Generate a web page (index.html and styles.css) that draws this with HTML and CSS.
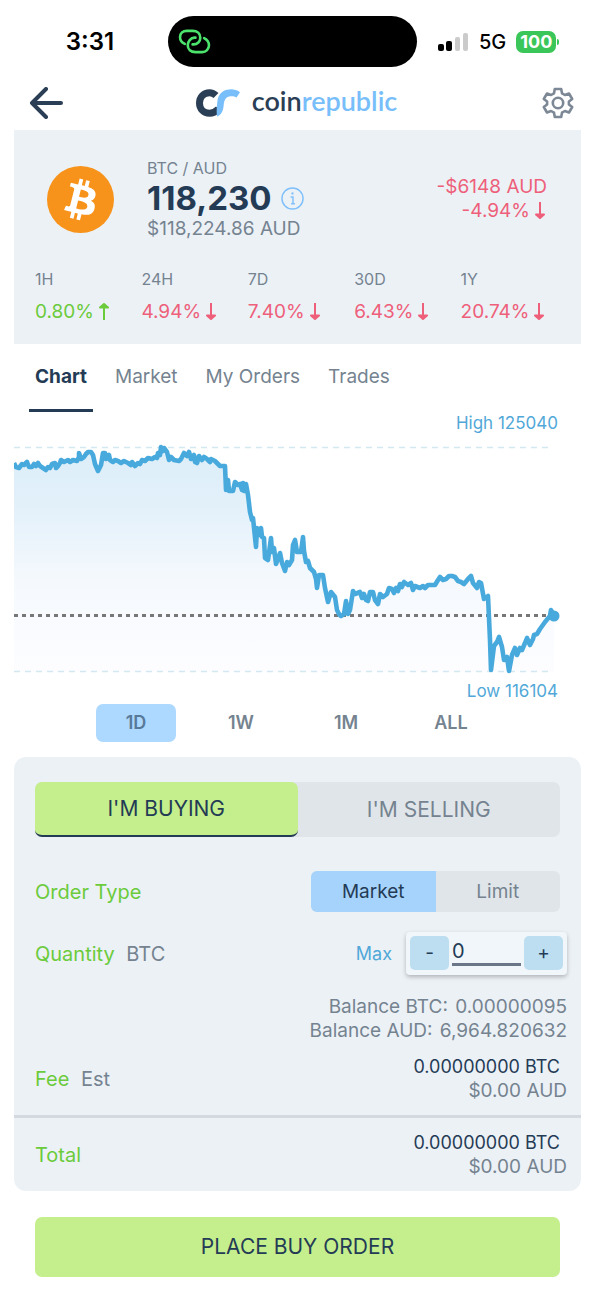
FILE: index.html
```html
<!DOCTYPE html>
<html lang="en">
<head>
    <meta charset="UTF-8">
    <meta name="viewport" content="width=device-width, initial-scale=1.0">
    <title>BTC / AUD - coinrepublic</title>
    <link rel="stylesheet" href="styles.css">
</head>
<body>
    <div class="status-bar">
        <div class="time">3:31</div>
        <div class="island">
            <svg width="33" height="27" viewBox="0 0 34 28" fill="none" stroke="#4be36c" stroke-width="2.700" stroke-linecap="round">
                <path d="M7 16.500C4 15 2 12.500 2 9.500C2 5.500 5 3 9 3H15C20 3 23 6 23 10C23 14 20 17 16 17H15"/>
                <path d="M27 10.500C30 12 32 14.500 32 18C32 22 29 25 25 25H18C13 25 10 22 10 18C10 14 13 10 17 10H18"/>
            </svg>
        </div>
        <div class="indicators">
            <svg width="31" height="20" viewBox="0 0 31 20">
                <rect x="0" y="12" width="6" height="7" rx="2" fill="#000"/>
                <rect x="8" y="9" width="6" height="10" rx="2" fill="#000"/>
                <rect x="17" y="5" width="5" height="14" rx="2" fill="#cbcbcb"/>
                <rect x="25" y="1" width="5" height="18" rx="2" fill="#cbcbcb"/>
            </svg>
            <span class="network">5G</span>
            <span class="battery">100</span>
        </div>
    </div>

    <header class="header">
        <button class="icon-button" aria-label="Back">
            <svg width="34" height="32" viewBox="0 0 34 32" fill="none" stroke="#2a3f55" stroke-width="4" stroke-linecap="round" stroke-linejoin="round">
                <path d="M17 2L3 16L17 30M3 16H32"/>
            </svg>
        </button>
        <a class="logo" href="#">
            <svg width="44" height="28" viewBox="0 0 44 28" fill="none">
                <path d="M20 6.500C18 4.500 16 3.700 13.500 3.700C7.700 3.700 3.500 8 3.500 14C3.500 20 7.700 24.200 13.500 24.200C17.500 24.200 20 22.500 22.500 20" stroke="#2a3f55" stroke-width="7"/>
                <path d="M21 27.500C25.800 25.500 27.300 21.500 27.700 16C28.200 10 30.500 7.500 34.500 7.200C37 7 38.800 7.400 40.500 8.500L44 3.200C41 1 37.500 .2 33.500 .4C26 .8 22 5.500 21.300 13C20.900 18 20.300 22 21 27.500Z" fill="#78befa"/>
            </svg>
            <span class="logo-text">coin<span>republic</span></span>
        </a>
        <button class="icon-button" aria-label="Settings">
            <svg width="32" height="32" viewBox="0 0 32 32" fill="none" stroke="#7d8896" stroke-width="2.600" stroke-linejoin="round">
                <path d="M12.800 2H19.200L20 6.300L22.900 8L27 6.500L30.200 12L26.900 14.500V17.500L30.200 20L27 25.500L22.900 24L20 25.700L19.200 30H12.800L12 25.700L9.100 24L5 25.500L1.800 20L5.100 17.500V14.500L1.800 12L5 6.500L9.100 8L12 6.300Z"/>
                <circle cx="16" cy="16" r="5.200"/>
            </svg>
        </button>
    </header>

    <main>
        <section class="summary">
            <div class="coin">
                <svg class="coin-icon" width="67" height="67" viewBox="0 0 32 32">
                    <circle cx="16" cy="16" r="16" fill="#f7931a"/>
                    <path fill="#fff" d="M23.189 14.020c.314-2.096-1.283-3.223-3.465-3.975l.708-2.840-1.728-.43-.69 2.765c-.454-.114-.92-.22-1.385-.326l.695-2.783L15.596 6l-.708 2.839c-.376-.086-.746-.17-1.104-.26l.002-.009-2.384-.595-.46 1.846s1.283.294 1.256.312c.7.175.826.638.805 1.006l-.806 3.235c.048.012.11.030.180.057l-.183-.045-1.130 4.532c-.086.212-.303.531-.793.410.018.025-1.256-.313-1.256-.313l-.858 1.978 2.250.561c.418.105.828.215 1.231.318l-.715 2.872 1.727.430.708-2.840c.472.127.930.245 1.378.357l-.706 2.828 1.728.430.715-2.866c2.948.558 5.164.333 6.097-2.333.752-2.146-.037-3.385-1.588-4.192 1.130-.260 1.980-1.003 2.207-2.538zm-3.950 5.538c-.533 2.147-4.148.986-5.320.695l.950-3.805c1.172.293 4.929.872 4.370 3.110zm.535-5.569c-.487 1.953-3.495.960-4.470.717l.860-3.450c.975.243 4.118.696 3.610 2.733z"/>
                </svg>
                <div class="price">
                    <div class="pair">BTC / AUD</div>
                    <div class="last">
                        118,230
                        <svg width="23" height="23" viewBox="0 0 24 24" fill="none" stroke="#7fc0fa" stroke-width="1.500">
                            <circle cx="12" cy="12" r="11"/>
                            <path d="M10 10.500H12.500V17M10.500 17.500H14.500"/>
                            <circle cx="12" cy="6.800" r="1.200" fill="#7fc0fa" stroke="none"/>
                        </svg>
                    </div>
                    <div class="aud">$118,224.86 AUD</div>
                </div>
                <div class="change down">
                    <div>-$6148 AUD</div>
                    <div>-4.94%<svg class="arrow" viewBox="0 0 10 17"><path d="M5 0V14M1 12.500L5 16L9 12.500Z"/></svg></div>
                </div>
            </div>
            <dl class="periods">
                <div>
                    <dt>1H</dt>
                    <dd class="up">0.80%<svg class="arrow" viewBox="0 0 10 17"><path d="M5 17V3M1 4.500L5 1L9 4.500Z"/></svg></dd>
                </div>
                <div>
                    <dt>24H</dt>
                    <dd class="down">4.94%<svg class="arrow" viewBox="0 0 10 17"><path d="M5 0V14M1 12.500L5 16L9 12.500Z"/></svg></dd>
                </div>
                <div>
                    <dt>7D</dt>
                    <dd class="down">7.40%<svg class="arrow" viewBox="0 0 10 17"><path d="M5 0V14M1 12.500L5 16L9 12.500Z"/></svg></dd>
                </div>
                <div>
                    <dt>30D</dt>
                    <dd class="down">6.43%<svg class="arrow" viewBox="0 0 10 17"><path d="M5 0V14M1 12.500L5 16L9 12.500Z"/></svg></dd>
                </div>
                <div>
                    <dt>1Y</dt>
                    <dd class="down">20.74%<svg class="arrow" viewBox="0 0 10 17"><path d="M5 0V14M1 12.500L5 16L9 12.500Z"/></svg></dd>
                </div>
            </dl>
        </section>

        <nav class="tabs">
            <a class="active" href="#">Chart</a>
            <a href="#">Market</a>
            <a href="#">My Orders</a>
            <a href="#">Trades</a>
        </nav>

        <section class="chart">
            <div class="limit">High 125040</div>
            <svg class="plot" viewBox="14 434 567 246" fill="none">
                <defs>
                    <linearGradient id="fade" x1="0" y1="447" x2="0" y2="672" gradientUnits="userSpaceOnUse">
                        <stop offset="0" stop-color="#dceef9"/>
                        <stop offset="0.25" stop-color="#e2f0fa"/>
                        <stop offset="0.6" stop-color="#f5f9fd"/>
                        <stop offset="1" stop-color="#fdfdff"/>
                    </linearGradient>
                </defs>
                <path id="area" fill="url(#fade)"/>
                <path d="M14 447.500H552M14 671.500H552" stroke="#d3e8f1" stroke-width="1.300" stroke-dasharray="6 5"/>
                <path d="M14 615.500H552" stroke="#777" stroke-width="3" stroke-dasharray="4 4"/>
                <path id="line" stroke="#48a9dc" stroke-width="4.600" stroke-linejoin="round" stroke-linecap="butt"/>
                <circle cx="554" cy="616" r="5.500" fill="#48a9dc"/>
            </svg>
            <div class="limit">Low 116104</div>
        </section>

        <div class="ranges">
            <button class="active">1D</button>
            <button>1W</button>
            <button>1M</button>
            <button>ALL</button>
        </div>

        <form class="order">
            <div class="panel">
                <div class="side">
                    <button type="button" class="active">I'M BUYING</button>
                    <button type="button">I'M SELLING</button>
                </div>

                <div class="row type-row">
                    <span class="label">Order Type</span>
                    <div class="type">
                        <button type="button" class="active">Market</button>
                        <button type="button">Limit</button>
                    </div>
                </div>

                <div class="row quantity-row">
                    <label class="label" for="quantity">Quantity <span>BTC</span></label>
                    <a class="max" href="#">Max</a>
                    <div class="stepper">
                        <button type="button">-</button>
                        <input id="quantity" type="text" inputmode="decimal" value="0">
                        <button type="button">+</button>
                    </div>
                </div>

                <div class="balance">
                    <div>Balance BTC: <span>0.00000095</span></div>
                    <div>Balance AUD: <span>6,964.820632</span></div>
                </div>

                <div class="row amount-row">
                    <span class="label">Fee <span>Est</span></span>
                    <div class="amount">
                        <div class="btc">0.00000000 BTC</div>
                        <div>$0.00 AUD</div>
                    </div>
                </div>
                <hr>
                <div class="row amount-row">
                    <span class="label">Total</span>
                    <div class="amount">
                        <div class="btc">0.00000000 BTC</div>
                        <div>$0.00 AUD</div>
                    </div>
                </div>
            </div>
            <button class="submit">PLACE BUY ORDER</button>
        </form>
    </main>

    <script src="chart.js"></script>
</body>
</html>
```

FILE: chart.js
```js
const points = [
    [14,463],[16,467],[19,468],[22,464],[24,465],[27,462],[29,467],[32,467],[34,464],[36,466],[38,463],
    [40,466],[43,468],[46,470],[48,467],[50,468],[52,464],[55,463],[56,468],[58,466],[60,463],[61,460],
    [64,462],[68,460],[70,462],[73,460],[77,461],[79,457],[79,453],[81,459],[84,457],[86,454],[88,452],
    [91,452],[93,455],[95,464],[98,471],[101,465],[103,453],[105,453],[106,459],[109,455],[110,460],
    [113,462],[115,460],[118,461],[121,463],[124,461],[128,463],[131,465],[132,462],[135,466],[138,463],
    [140,464],[142,460],[145,461],[148,458],[152,459],[155,457],[157,458],[158,453],[160,455],[161,447],
    [163,451],[164,448],[167,452],[169,460],[171,457],[174,460],[179,461],[181,459],[183,455],[184,453],
    [187,456],[189,452],[191,459],[194,455],[195,462],[197,463],[199,456],[202,460],[204,457],[207,459],
    [210,462],[211,459],[215,461],[218,464],[220,466],[225,466],[226,490],[228,480],[229,491],[233,491],
    [235,482],[238,485],[240,484],[242,490],[243,483],[244,491],[246,484],[248,495],[250,512],[252,520],
    [253,518],[256,547],[257,528],[260,535],[261,528],[262,537],[264,538],[265,558],[268,560],[271,538],
    [272,552],[274,548],[276,564],[280,553],[282,563],[285,571],[287,562],[289,565],[292,560],[293,545],
    [295,540],[297,552],[301,552],[303,537],[304,551],[306,562],[308,561],[310,568],[314,572],[316,579],
    [317,588],[319,575],[323,575],[325,588],[328,602],[331,592],[335,597],[337,610],[339,614],[341,616],
    [344,614],[346,601],[348,614],[350,610],[353,591],[355,594],[360,592],[362,598],[364,594],[366,600],
    [368,601],[370,592],[373,592],[375,600],[378,604],[380,594],[383,597],[387,594],[389,588],[392,589],
    [394,593],[396,588],[398,591],[400,584],[402,587],[404,582],[408,585],[411,583],[413,590],[415,586],
    [420,588],[423,586],[425,588],[428,585],[435,585],[438,580],[440,577],[443,580],[446,579],[449,576],
    [452,576],[455,577],[458,581],[461,582],[464,584],[468,579],[471,576],[473,583],[477,588],[479,582],
    [481,583],[484,599],[488,596],[490,640],[491,670],[494,646],[497,642],[499,637],[502,647],[504,660],
    [507,657],[509,671],[512,655],[515,648],[517,655],[520,648],[522,650],[525,643],[527,638],[530,645],
    [533,639],[534,635],[537,634],[540,629],[545,622],[550,616],[551,610],[554,616]
];

const path = 'M' + points.map(p => p.join(' ')).join('L');
document.getElementById('line').setAttribute('d', path);
document.getElementById('area').setAttribute('d', path + 'V672H14Z');
```

FILE: styles.css
```css
* {
    box-sizing: border-box;
}

body {
    margin: 0;
    font-family: Inter, "Liberation Sans", sans-serif;
    font-size: 19px;
    line-height: 24px;
    color: #758390;
    background: #fff;
}

button,
input {
    font: inherit;
    color: inherit;
    border: none;
    padding: 0;
    background: none;
}

button {
    cursor: pointer;
}

a {
    color: inherit;
    text-decoration: none;
}

svg {
    display: block;
    flex-shrink: 0;
}

/* status bar */
.status-bar {
    display: grid;
    grid-template-columns: 1fr 249px 1fr;
    align-items: center;
    padding: 16px 10px 8px 0;
    color: #000;
}

.time {
    padding-left: 12px;
    text-align: center;
    font-size: 24px;
    font-weight: 600;
}

.island {
    display: flex;
    align-items: center;
    height: 51px;
    padding-left: 10px;
    border-radius: 26px;
    background: #000;
}

.indicators {
    display: flex;
    align-items: center;
    padding-left: 21px;
}

.network {
    margin: 0 10px;
    font-size: 20px;
    font-weight: 500;
}

.battery {
    position: relative;
    width: 40px;
    border-radius: 7px;
    background: #3ac659;
    color: #fff;
    text-align: center;
    font-size: 18px;
    font-weight: 700;
    line-height: 22px;
}

.battery::after {
    content: "";
    position: absolute;
    left: 41px;
    top: 8px;
    width: 2px;
    height: 6px;
    border-radius: 0 2px 2px 0;
    background: #3ac659;
}

/* header */
.header {
    display: flex;
    align-items: center;
    justify-content: space-between;
    height: 55px;
    padding: 0 21px 0 29px;
}

.logo {
    display: flex;
    align-items: center;
    gap: 12px;
    margin-right: 12px;
}

.logo-text {
    padding-bottom: 3px;
    font-family: Lato, sans-serif;
    font-size: 27px;
    font-weight: 600;
    color: #2a3f55;
}

.logo-text span {
    color: #78befa;
}

main {
    padding: 0 14px;
}

/* summary */
.summary {
    padding: 28px 14px 20px 21px;
    background: #ecf1f6;
}

.coin {
    display: flex;
    align-items: center;
    padding: 0 20px 0 12px;
}

.price {
    margin-left: 33px;
}

.pair {
    font-size: 16px;
    line-height: 20px;
}

.last {
    display: flex;
    align-items: center;
    gap: 9px;
    font-size: 33px;
    font-weight: 700;
    line-height: 40px;
    color: #243b55;
}

.aud {
    line-height: 22px;
}

.change {
    margin-left: auto;
    text-align: right;
}

.up {
    color: #6bcb3b;
}

.down {
    color: #ee5f7a;
}

.arrow {
    display: inline-block;
    width: 10px;
    height: 17px;
    margin: 0 2px 0 5px;
    vertical-align: -2px;
    fill: currentColor;
    stroke: currentColor;
    stroke-width: 2;
    stroke-linejoin: round;
}

.periods {
    display: grid;
    grid-template-columns: repeat(5, 1fr);
    margin: 27px 0 0;
}

.periods dt {
    font-size: 16px;
}

.periods dd {
    height: 24px;
    margin: 9px 0 0;
    white-space: nowrap;
}

/* tabs */
.tabs {
    display: flex;
    gap: 16px;
    padding: 0 15px;
}

.tabs a {
    padding: 21px 6px 20px;
    border-bottom: 3px solid transparent;
}

.tabs .active {
    border-color: #243b55;
    font-weight: 700;
    color: #243b55;
}

/* chart */
.limit {
    padding-right: 23px;
    text-align: right;
    font-size: 17px;
    line-height: 22px;
    color: #51a8d8;
}

.plot {
    width: 100%;
}

.ranges {
    display: flex;
    justify-content: center;
    gap: 25px;
    margin-top: 2px;
    padding-right: 8px;
}

.ranges button {
    width: 80px;
    height: 38px;
    border-radius: 7px;
    font-size: 18px;
    font-weight: 600;
}

.ranges .active {
    background: #add8ff;
    color: #587a99;
}

/* order form */
.panel {
    margin-top: 15px;
    padding: 25px 0 12px;
    border-radius: 12px;
    background: #ecf1f6;
}

.side {
    display: flex;
    margin: 0 21px;
    border-radius: 7px;
    background: #e0e5e9;
}

.side button {
    flex: 1;
    height: 55px;
    border-radius: 7px;
    font-size: 21px;
}

.side .active {
    border-bottom: 2px solid #243b55;
    background: #c5ef8d;
    color: #243b55;
}

.row {
    display: flex;
    align-items: center;
    padding: 0 14px 0 21px;
}

.label {
    margin-right: auto;
    font-size: 20px;
    color: #6bcb3b;
}

.label span {
    margin-left: 6px;
    color: #758390;
}

.type-row {
    margin-top: 34px;
    padding-right: 21px;
}

.type {
    display: flex;
    width: 249px;
    border-radius: 6px;
    background: #e0e5e9;
    overflow: hidden;
}

.type button {
    flex: 1;
    height: 41px;
}

.type .active {
    background: #a6d3fc;
    color: #243b55;
}

.quantity-row {
    margin-top: 20px;
}

.max {
    margin-right: 14px;
    font-size: 18px;
    color: #51a8d8;
}

.stepper {
    display: flex;
    gap: 3px;
    padding: 4px 4px 5px;
    border-radius: 4px;
    background: #f1f6fb;
    box-shadow: 0 2px 4px rgba(0, 0, 0, 0.25);
}

.stepper button {
    width: 39px;
    height: 34px;
    border-radius: 5px;
    background: #bcdef0;
    color: #243b55;
}

.stepper input {
    width: 69px;
    height: 30px;
    padding-top: 3px;
    border-bottom: 3px solid #6c7689;
    border-radius: 0;
    font-size: 20px;
    color: #243b55;
}

.balance {
    margin: 20px 14px 12px;
    text-align: right;
}

.balance span {
    margin-left: 2px;
}

.amount {
    text-align: right;
}

.amount .btc {
    padding-right: 7px;
    font-size: 18px;
    color: #243b55;
}

hr {
    height: 3px;
    margin: 12px 0 13px;
    border: none;
    background: #d3d9de;
}

.submit {
    display: block;
    width: calc(100% - 42px);
    height: 60px;
    margin: 26px 21px 13px;
    border-radius: 7px;
    background: #c5ef8d;
    color: #243b55;
    font-size: 21px;
}
```
